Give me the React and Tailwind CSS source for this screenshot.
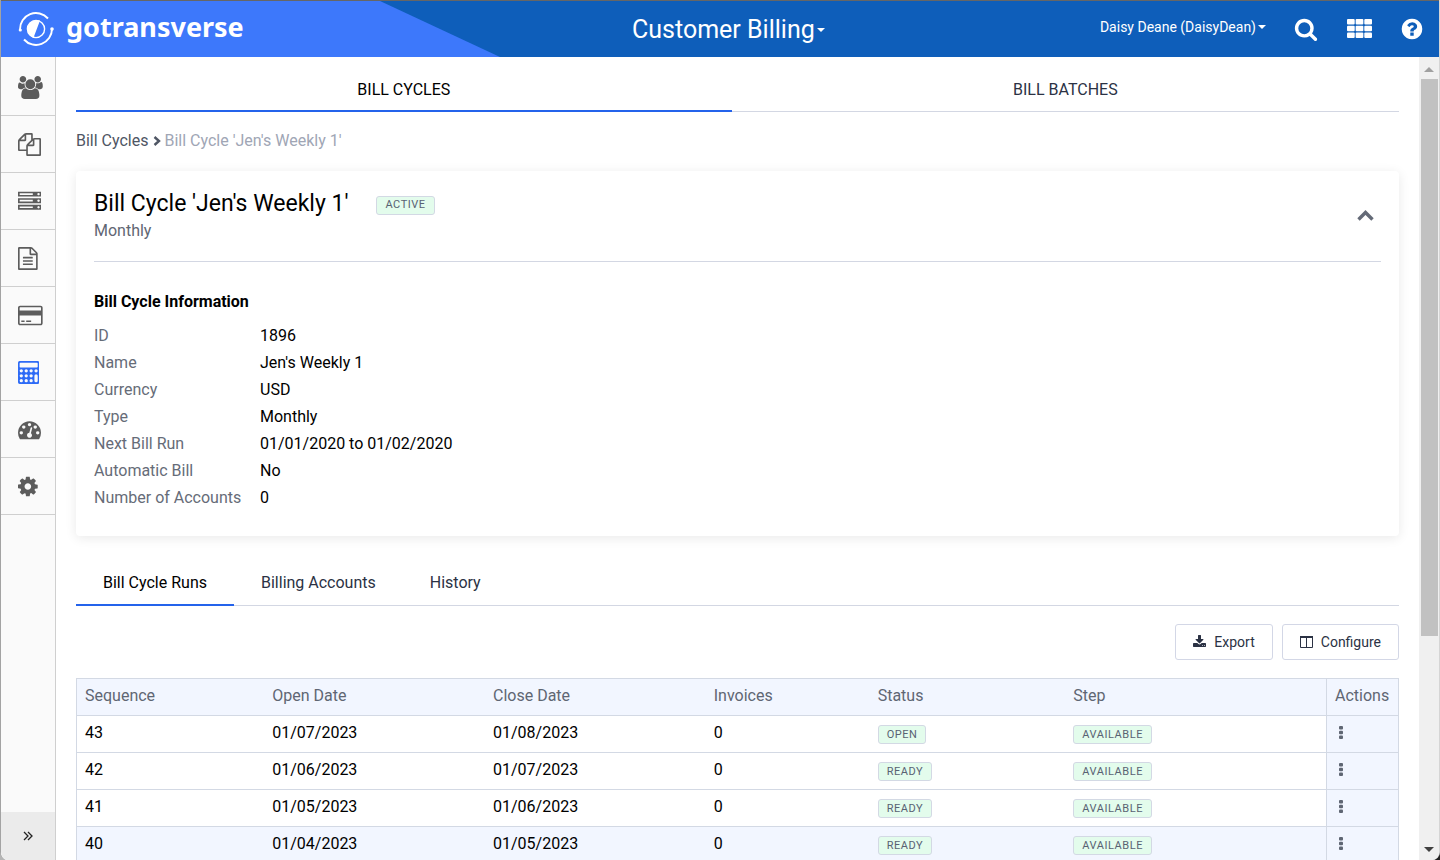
import React from 'react';

const icons = {
  users: {
    viewBox: '0 0 1920 1792',
    d: 'M593 896q-162 5-265 128h-134q-82 0-138-40.5t-56-118.5q0-353 124-353 6 0 43.5 21t97.5 42.5 119.5 21.5q67 0 133-23-5 37-5 66 0 159 93 293zm1071 637q0 120-73 189.5t-194 69.5h-874q-121 0-194-69.5t-73-189.5q0-53 3.5-103.5t14-109 26.5-108.5 43-97.5 62-81 85.5-53.5 111.5-20q10 0 43 21.5t73 48 107 48 135 21.5 135-21.5 107-48 73-48 43-21.5q61 0 111.5 20t85.5 53.5 62 81 43 97.5 26.5 108.5 14 109 3.5 103.5zm-1024-1277q0 106-75 181t-181 75-181-75-75-181 75-181 181-75 181 75 75 181zm704 384q0 159-112.5 271.5t-271.5 112.5-271.5-112.5-112.5-271.5 112.5-271.5 271.5-112.5 271.5 112.5 112.5 271.5zm576 225q0 78-56 118.5t-138 40.5h-134q-103-123-265-128 93-134 93-293 0-29-5-66 66 23 133 23 59 0 119.5-21.5t97.5-42.5 43.5-21q124 0 124 353zm-128-609q0 106-75 181t-181 75-181-75-75-181 75-181 181-75 181 75 75 181z',
  },
  files: {
    viewBox: '0 0 1792 1792',
    d: 'M1696 384q40 0 68 28t28 68v1216q0 40-28 68t-68 28h-960q-40 0-68-28t-28-68v-288h-544q-40 0-68-28t-28-68v-672q0-40 20-88t48-76l408-408q28-28 76-48t88-20h416q40 0 68 28t28 68v328q68-40 128-40h416zm-544 213l-299 299h299v-299zm-640-384l-299 299h299v-299zm196 647l316-316v-416h-384v416q0 40-28 68t-68 28h-416v640h512v-256q0-40 20-88t48-76zm956 804v-1152h-384v416q0 40-28 68t-68 28h-416v640h896z',
  },
  server: {
    viewBox: '0 0 1792 1792',
    d: 'M128 1408h1024v-128h-1024v128zm0-512h1024v-128h-1024v128zm1568 448q0-40-28-68t-68-28-68 28-28 68 28 68 68 28 68-28 28-68zm-1568-960h1024v-128h-1024v128zm1568 448q0-40-28-68t-68-28-68 28-28 68 28 68 68 28 68-28 28-68zm0-512q0-40-28-68t-68-28-68 28-28 68 28 68 68 28 68-28 28-68zm96 832v384h-1792v-384h1792zm0-512v384h-1792v-384h1792zm0-512v384h-1792v-384h1792z',
  },
  fileText: {
    viewBox: '128 0 1536 1792',
    d: 'M1596 380q28 28 48 76t20 88v1152q0 40-28 68t-68 28h-1344q-40 0-68-28t-28-68v-1600q0-40 28-68t68-28h896q40 0 88 20t76 48zm-444-244v376h376q-10-29-22-41l-313-313q-12-12-41-22zm384 1528v-1024h-416q-40 0-68-28t-28-68v-416h-768v1536h1280zm-1024-864q0-14 9-23t23-9h704q14 0 23 9t9 23v64q0 14-9 23t-23 9h-704q-14 0-23-9t-9-23v-64zm736 224q14 0 23 9t9 23v64q0 14-9 23t-23 9h-704q-14 0-23-9t-9-23v-64q0-14 9-23t23-9h704zm0 256q14 0 23 9t9 23v64q0 14-9 23t-23 9h-704q-14 0-23-9t-9-23v-64q0-14 9-23t23-9h704z',
  },
  creditCard: {
    viewBox: '0 0 1920 1792',
    d: 'M1760 128q66 0 113 47t47 113v1216q0 66-47 113t-113 47h-1600q-66 0-113-47t-47-113v-1216q0-66 47-113t113-47h1600zm-1600 128q-13 0-22.5 9.5t-9.5 22.5v224h1664v-224q0-13-9.5-22.5t-22.5-9.5h-1600zm1600 1280q13 0 22.5-9.5t9.5-22.5v-608h-1664v608q0 13 9.5 22.5t22.5 9.5h1600zm-1504-128v-128h256v128h-256zm384 0v-128h384v128h-384z',
  },
  calculator: {
    viewBox: '0 0 1664 1792',
    d: 'M128 0h1408a128 128 0 0 1 128 128v1536a128 128 0 0 1-128 128h-1408a128 128 0 0 1-128-128v-1536a128 128 0 0 1 128-128zM192 128a64 64 0 0 0-64 64v256a64 64 0 0 0 64 64h1280a64 64 0 0 0 64-64v-256a64 64 0 0 0-64-64zM256 640a128 128 0 1 0 0 256a128 128 0 1 0 0-256zM640 640a128 128 0 1 0 0 256a128 128 0 1 0 0-256zM1024 640a128 128 0 1 0 0 256a128 128 0 1 0 0-256zM1408 640a128 128 0 1 0 0 256a128 128 0 1 0 0-256zM256 1024a128 128 0 1 0 0 256a128 128 0 1 0 0-256zM640 1024a128 128 0 1 0 0 256a128 128 0 1 0 0-256zM1024 1024a128 128 0 1 0 0 256a128 128 0 1 0 0-256zM256 1408a128 128 0 1 0 0 256a128 128 0 1 0 0-256zM640 1408a128 128 0 1 0 0 256a128 128 0 1 0 0-256zM1024 1408a128 128 0 1 0 0 256a128 128 0 1 0 0-256zM1408 1024a128 128 0 0 0-128 128v384a128 128 0 0 0 256 0v-384a128 128 0 0 0-128-128z',
  },
  dashboard: {
    viewBox: '0 0 1792 1792',
    d: 'M384 1152q0-53-37.5-90.5t-90.5-37.5-90.5 37.5-37.5 90.5 37.5 90.5 90.5 37.5 90.5-37.5 37.5-90.5zm192-448q0-53-37.5-90.5t-90.5-37.5-90.5 37.5-37.5 90.5 37.5 90.5 90.5 37.5 90.5-37.5 37.5-90.5zm428 481l101-382q6-26-7.5-48.5t-38.5-29.5-48 6.5-30 39.5l-101 382q-60 5-107 43.5t-63 98.5q-20 77 20 146t117 89 146-20 89-117q16-60-6-117t-72-91zm660-33q0-53-37.5-90.5t-90.5-37.5-90.5 37.5-37.5 90.5 37.5 90.5 90.5 37.5 90.5-37.5 37.5-90.5zm-640-640q0-53-37.5-90.5t-90.5-37.5-90.5 37.5-37.5 90.5 37.5 90.5 90.5 37.5 90.5-37.5 37.5-90.5zm448 192q0-53-37.5-90.5t-90.5-37.5-90.5 37.5-37.5 90.5 37.5 90.5 90.5 37.5 90.5-37.5 37.5-90.5zm320 448q0 261-141 483-19 29-54 29h-1402q-35 0-54-29-141-221-141-483 0-182 71-348t191-286 286-191 348-71 348 71 286 191 191 286 71 348z',
  },
  cog: {
    viewBox: '128 0 1536 1792',
    d: 'M1152 896q0-106-75-181t-181-75-181 75-75 181 75 181 181 75 181-75 75-181zm512-109v222q0 12-8 23t-20 13l-185 28q-19 54-39 91 35 50 107 138 10 12 10 25t-9 23q-27 37-99 108t-94 71q-12 0-26-9l-138-108q-44 23-91 38-16 136-29 186-7 28-36 28h-222q-14 0-24.5-8.5t-11.5-21.5l-28-184q-49-16-90-37l-141 107q-10 9-25 9-14 0-25-11-126-114-165-168-7-10-7-23 0-12 8-23 15-21 51-66.5t54-70.5q-27-50-41-99l-183-27q-13-2-21-12.5t-8-23.5v-222q0-12 8-23t19-13l186-28q14-46 39-92-40-57-107-138-10-12-10-24 0-10 9-23 26-36 98.5-107.5t94.5-71.5q13 0 26 10l138 107q44-23 91-38 16-136 29-186 7-28 36-28h222q14 0 24.5 8.5t11.5 21.5l28 184q49 16 90 37l142-107q9-9 24-9 13 0 25 10 129 119 165 170 7 8 7 22 0 12-8 23-15 21-51 66.5t-54 70.5q26 50 41 98l183 28q13 2 21 12.5t8 23.5z',
  },
  search: {
    viewBox: '0 0 1792 1792',
    d: 'M1216 832q0-185-131.5-316.5t-316.5-131.5-316.5 131.5-131.5 316.5 131.5 316.5 316.5 131.5 316.5-131.5 131.5-316.5zm512 832q0 52-38 90t-90 38q-54 0-90-38l-343-342q-179 124-399 124-143 0-273.5-55.5t-225-150-150-225-55.5-273.5 55.5-273.5 150-225 225-150 273.5-55.5 273.5 55.5 225 150 150 225 55.5 273.5q0 220-124 399l343 343q37 37 37 90z',
  },
  help: {
    viewBox: '0 0 1792 1792',
    d: 'M1024 1376v-192q0-14-9-23t-23-9h-192q-14 0-23 9t-9 23v192q0 14 9 23t23 9h192q14 0 23-9t9-23zm256-672q0-88-55.5-163t-138.5-116-170-41q-243 0-371 213-15 24 8 42l132 100q7 6 19 6 16 0 25-12 53-68 86-92 34-24 86-24 48 0 85.5 26t37.5 59q0 38-20 61t-68 45q-63 28-115.5 86.5t-52.5 125.5v36q0 14 9 23t23 9h192q14 0 23-9t9-23q0-19 21.5-49.5t54.5-49.5q32-18 49-28.5t46-35 44.5-48 28-60.5 12.5-81zm384 192q0 209-103 385.5t-279.5 279.5-385.5 103-385.5-103-279.5-279.5-103-385.5 103-385.5 279.5-279.5 385.5-103 385.5 103 279.5 279.5 103 385.5z',
  },
  download: {
    viewBox: '64 0 1664 1792',
    d: 'M1344 1344q0-26-19-45t-45-19-45 19-19 45 19 45 45 19 45-19 19-45zm256 0q0-26-19-45t-45-19-45 19-19 45 19 45 45 19 45-19 19-45zm128-224v320q0 40-28 68t-68 28h-1472q-40 0-68-28t-28-68v-320q0-40 28-68t68-28h465l135 136q58 56 136 56t136-56l136-136h464q40 0 68 28t28 68zm-325-569q17 41-14 70l-448 448q-18 19-45 19t-45-19l-448-448q-31-29-14-70 17-39 59-39h256v-448q0-26 19-45t45-19h256q26 0 45 19t19 45v448h256q42 0 59 39z',
  },
};

const Icon = ({ name, className }) => (
  <svg viewBox={icons[name].viewBox} className={className} fill="currentColor" fillRule="evenodd" aria-hidden="true">
    <path d={icons[name].d} />
  </svg>
);

const Logo = () => (
  <svg viewBox="0 0 36 36" className="h-9 w-9" fill="none" stroke="#fff" aria-hidden="true">
    <path d="M2 18.500A16 16 0 0 1 30 7.500" strokeWidth="1.900" />
    <path d="M34 18A16 16 0 0 1 6 28.500" strokeWidth="1.900" />
    <circle cx="2.300" cy="19" r="1.600" fill="#fff" stroke="none" />
    <circle cx="34" cy="18" r="1.800" fill="#fff" stroke="none" />
    <circle cx="18" cy="18" r="8.600" strokeWidth="1.400" />
    <path d="M22 9.500A9.200 9.200 0 1 0 15.500 26.800Z" fill="#fff" stroke="none" />
  </svg>
);

const Caret = () => (
  <span className="border-x-4 border-t-4 border-x-transparent border-t-white" />
);

const GridIcon = () => (
  <svg viewBox="0 0 25 19" className="h-[19px] w-[25px]" fill="currentColor" aria-hidden="true">
    {[0, 6.8, 13.6].map((y) =>
      [0, 8.65, 17.3].map((x) => <rect key={`${x}-${y}`} x={x} y={y} width="7.700" height="5.400" rx="1" />)
    )}
  </svg>
);

const Header = () => (
  <header className="flex h-[57px] shrink-0 items-stretch border-t border-[#666] bg-[#0e5eba] text-white">
    <div className="flex w-[499px] items-center gap-3 bg-[#3d78fb] pl-[17px] [clip-path:polygon(0_0,379px_0,100%_100%,0_100%)]">
      <Logo />
      <span className="pb-1 font-['Noto_Sans'] text-[27px] leading-8 font-bold">gotransverse</span>
    </div>
    <div className="flex flex-1 items-center justify-between pr-[15px] pl-[132px]">
      <button className="flex items-center gap-[2px] pt-px text-[25px]">
        Customer Billing
        <Caret />
      </button>
      <div className="flex items-center">
        <button className="mr-7 flex items-center gap-[2px] pb-1 text-sm">
          Daisy Deane (DaisyDean)
          <Caret />
        </button>
        <button aria-label="Search" className="mr-[29px]">
          <Icon name="search" className="size-6" />
        </button>
        <button aria-label="Apps" className="mr-7 pb-[2px]">
          <GridIcon />
        </button>
        <button aria-label="Help">
          <Icon name="help" className="size-6" />
        </button>
      </div>
    </div>
  </header>
);

const navItems = [
  { icon: 'users', label: 'Accounts' },
  { icon: 'files', label: 'Orders' },
  { icon: 'server', label: 'Services' },
  { icon: 'fileText', label: 'Invoices' },
  { icon: 'creditCard', label: 'Payments' },
  { icon: 'calculator', label: 'Billing', active: true },
  { icon: 'dashboard', label: 'Dashboard' },
  { icon: 'cog', label: 'Settings' },
];

const Sidebar = () => (
  <nav className="flex w-[55px] shrink-0 flex-col border-r border-[#cfcfcf] bg-[#fafafa] pt-[2px]">
    {navItems.map(({ icon, label, active }) => (
      <a
        key={icon}
        href="#"
        aria-label={label}
        className={`flex h-[57px] shrink-0 items-center border-b border-[#cfcfcf] pl-[17px] ${active ? 'text-[#2e6bf6]' : 'text-[#5c5c5c]'}`}
      >
        <Icon name={icon} className="h-[23px] w-auto" />
      </a>
    ))}
    <button aria-label="Expand menu" className="mt-auto flex h-12 items-center justify-center bg-[#ebebeb] text-[#222]">
      <svg viewBox="0 0 10 10" className="size-[10px]" fill="none" stroke="currentColor" strokeWidth="1.3" aria-hidden="true">
        <path d="M1 1l4 4-4 4M5 1l4 4-4 4" />
      </svg>
    </button>
  </nav>
);

const Badge = ({ children }) => (
  <span className="inline-flex h-[19px] items-center rounded-[3px] border border-[#d3d9e4] bg-[#e3fcec] px-2 text-[11px] leading-4 tracking-wider text-[#596273] uppercase">
    {children}
  </span>
);

const details = [
  ['ID', '1896'],
  ['Name', "Jen's Weekly 1"],
  ['Currency', 'USD'],
  ['Type', 'Monthly'],
  ['Next Bill Run', '01/01/2020 to 01/02/2020'],
  ['Automatic Bill', 'No'],
  ['Number of Accounts', '0'],
];

const BillCycleCard = () => (
  <section className="mt-[18px] rounded bg-white px-[18px] pt-[17px] pb-[25px] shadow-[0_2px_12px_rgba(0,0,0,0.09)]">
    <div className="flex items-center justify-between border-b border-[#d3d7e3] pr-[7px] pb-[18px]">
      <div>
        <div className="flex items-center gap-7">
          <h1 className="text-[23px] leading-8 text-black">Bill Cycle 'Jen's Weekly 1'</h1>
          <div className="flex pt-[2px]">
            <Badge>Active</Badge>
          </div>
        </div>
        <p className="-mt-px text-[#5f6673]">Monthly</p>
      </div>
      <button aria-label="Collapse" className="text-[#646a77]">
        <svg viewBox="0 0 17 11" className="h-[11px] w-[17px]" fill="none" stroke="currentColor" strokeWidth="3.400" aria-hidden="true">
          <path d="M1.500 9.500l7-7 7 7" />
        </svg>
      </button>
    </div>
    <h2 className="mt-7 font-bold text-black">Bill Cycle Information</h2>
    <dl className="mt-2 grid grid-cols-[166px_1fr] leading-[27px]">
      {details.map(([label, value]) => (
        <React.Fragment key={label}>
          <dt className="text-[#666c78]">{label}</dt>
          <dd className="text-black">{value}</dd>
        </React.Fragment>
      ))}
    </dl>
  </section>
);

const runs = [
  { sequence: 43, open: '01/07/2023', close: '01/08/2023', status: 'Open' },
  { sequence: 42, open: '01/06/2023', close: '01/07/2023', status: 'Ready' },
  { sequence: 41, open: '01/05/2023', close: '01/06/2023', status: 'Ready' },
  { sequence: 40, open: '01/04/2023', close: '01/05/2023', status: 'Ready', highlighted: true },
];

const cell = 'px-2 pt-[5px] pb-[7px] align-top';

const RunsTable = () => (
  <table className="mt-[18px] w-full table-fixed border-collapse border border-[#d3d9e4] text-left text-black">
    <thead>
      <tr className="border-b border-[#d3d9e4] bg-[#f2f6ff] text-[#5f6673]">
        <th className={`w-[14.2%] font-normal ${cell}`}>Sequence</th>
        <th className={`w-[16.7%] font-normal ${cell}`}>Open Date</th>
        <th className={`w-[16.7%] font-normal ${cell}`}>Close Date</th>
        <th className={`w-[12.4%] font-normal ${cell}`}>Invoices</th>
        <th className={`w-[14.8%] font-normal ${cell}`}>Status</th>
        <th className={`font-normal ${cell}`}>Step</th>
        <th className={`w-[72px] border-l border-[#d3d9e4] font-normal ${cell}`}>Actions</th>
      </tr>
    </thead>
    <tbody>
      {runs.map((run) => (
        <tr key={run.sequence} className={`border-b border-[#d3d9e4] ${run.highlighted ? 'bg-[#f2f6ff]' : ''}`}>
          <td className={cell}>{run.sequence}</td>
          <td className={cell}>{run.open}</td>
          <td className={cell}>{run.close}</td>
          <td className={cell}>0</td>
          <td className={cell}>
            <div className="flex h-[23px] items-end">
              <Badge>{run.status}</Badge>
            </div>
          </td>
          <td className={cell}>
            <div className="flex h-[23px] items-end">
              <Badge>Available</Badge>
            </div>
          </td>
          <td className={`border-l border-[#d3d9e4] bg-[#f2f6ff] ${cell}`}>
            <button aria-label={`Actions for run ${run.sequence}`} className="flex h-[23px] items-center pb-px pl-1 text-[#5f6673]">
              <svg viewBox="0 0 4 13" className="h-[13px] w-1" fill="currentColor" aria-hidden="true">
                <rect width="4" height="3.500" rx="1" />
                <rect y="4.750" width="4" height="3.500" rx="1" />
                <rect y="9.500" width="4" height="3.500" rx="1" />
              </svg>
            </button>
          </td>
        </tr>
      ))}
    </tbody>
  </table>
);

const outlineButton = 'flex h-9 items-center gap-2 rounded-[3px] border border-[#d3d7e6] bg-white px-[17px] text-sm text-[#2b3244]';

const Scrollbar = () => (
  <div className="flex w-5 shrink-0 flex-col items-center bg-[#f0f0f0] pt-[10px] pb-2" aria-hidden="true">
    <span className="mb-[7px] border-x-[5px] border-b-[5px] border-x-transparent border-b-[#a0a0a0]" />
    <span className="h-[71%] w-[17px] bg-[#c1c1c1]" />
    <span className="mt-auto border-x-[5px] border-t-[5px] border-x-transparent border-t-[#404040]" />
  </div>
);

export default function App() {
  return (
    <div className="h-screen bg-linear-to-r from-[#b5b5b5] to-[#222]">
      <div className="flex h-full flex-col overflow-hidden rounded-b-lg border-x border-l-[#a3a3a3] border-r-[#d5d5d5] bg-white font-[Roboto,sans-serif] text-base">
        <Header />
        <div className="flex min-h-0 flex-1">
          <Sidebar />
          <main className="min-w-0 flex-1 overflow-hidden px-5">
            <div className="flex pt-[21px] shadow-[inset_0_-1px_0_#d3d7e3]">
              <button className="flex-auto border-b-2 border-[#2463eb] pb-2 text-black">BILL CYCLES</button>
              <button className="flex-auto border-b-2 border-transparent pb-2 text-[#2b3244]">BILL BATCHES</button>
            </div>

            <div className="mt-[17px] flex items-center">
              <a href="#" className="text-[#4f5664]">Bill Cycles</a>
              <svg viewBox="0 0 8 10" className="mx-1 h-[10px] w-2" fill="none" stroke="#4f5664" strokeWidth="2.400" aria-hidden="true">
                <path d="M1.500 1l4.500 4-4.500 4" />
              </svg>
              <span className="text-[#a0a6b5]">Bill Cycle 'Jen's Weekly 1'</span>
            </div>

            <BillCycleCard />

            {/* Detail tabs */}
            <div className="mt-[35px] flex shadow-[inset_0_-1px_0_#d3d7e3]">
              <button className="border-b-2 border-[#2463eb] px-[27px] pb-[9px] text-black">Bill Cycle Runs</button>
              <button className="border-b-2 border-transparent px-[27px] pb-[9px] text-[#2b3244]">Billing Accounts</button>
              <button className="border-b-2 border-transparent px-[27px] pb-[9px] text-[#2b3244]">History</button>
            </div>

            <div className="mt-[18px] flex justify-end gap-[9px]">
              <button className={outlineButton}>
                <Icon name="download" className="h-[14px] w-auto" />
                Export
              </button>
              <button className={outlineButton}>
                <svg viewBox="0 0 13 12" className="h-3 w-[13px]" fill="none" stroke="currentColor" aria-hidden="true">
                  <path d="M.5 1v10.500h12V1M6.500 1v10.500" />
                  <path d="M0 1h13" strokeWidth="2" />
                </svg>
                Configure
              </button>
            </div>

            <RunsTable />
          </main>
          <Scrollbar />
        </div>
      </div>
    </div>
  );
}
